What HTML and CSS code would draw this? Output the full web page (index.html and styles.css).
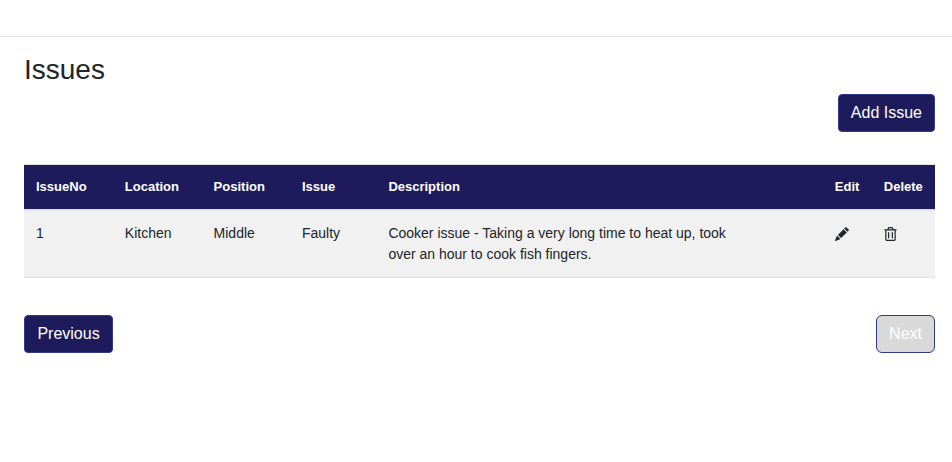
FILE: index.html
```html
<!DOCTYPE html>
<html lang="en">
<head>
<meta charset="utf-8">
<title>Issues</title>
<link rel="stylesheet" href="styles.css">
</head>
<body>
<header class="topbar"></header>
<main class="content">
  <h1 class="title">Issues</h1>
  <div class="actions">
    <button class="btn" type="button">Add Issue</button>
  </div>
  <table class="issues">
    <colgroup>
      <col class="c-no"><col class="c-loc"><col class="c-pos"><col class="c-issue"><col class="c-desc"><col class="c-edit"><col class="c-del">
    </colgroup>
    <thead>
      <tr>
        <th>IssueNo</th><th>Location</th><th>Position</th><th>Issue</th><th>Description</th><th>Edit</th><th>Delete</th>
      </tr>
    </thead>
    <tbody>
      <tr>
        <td>1</td>
        <td>Kitchen</td>
        <td>Middle</td>
        <td>Faulty</td>
        <td><div class="desc">Cooker issue - Taking a very long time to heat up, took over an hour to cook fish fingers.</div></td>
        <td>
          <svg class="icon" viewBox="0 0 16 16" aria-label="Edit"><path fill="currentColor" d="M12.854.146a.5.5 0 0 0-.707 0L10.5 1.793 14.207 5.5l1.647-1.646a.5.5 0 0 0 0-.708l-3-3zm.646 6.061L9.793 2.5 3.293 9H3.5a.5.5 0 0 1 .5.5v.5h.5a.5.5 0 0 1 .5.5v.5h.5a.5.5 0 0 1 .5.5v.5h.5a.5.5 0 0 1 .5.5v.207l6.5-6.5zm-7.468 7.468A.5.5 0 0 1 6 13.5V13h-.5a.5.5 0 0 1-.5-.5V12h-.5a.5.5 0 0 1-.5-.5V11h-.5a.5.5 0 0 1-.5-.5V10h-.5a.499.499 0 0 1-.175-.032l-.179.178a.5.5 0 0 0-.11.168l-2 5a.5.5 0 0 0 .65.65l5-2a.5.5 0 0 0 .168-.11l.178-.178z"/></svg>
        </td>
        <td>
          <svg class="icon icon-trash" viewBox="0 0 14 15" aria-label="Delete"><path fill="none" stroke="currentColor" stroke-width="1.3" d="M.5 3h13M4.6 3V1.6q0-1 1-1h2.8q1 0 1 1V3M2 3v10.2q0 1.2 1.2 1.2h7.6q1.2 0 1.2-1.2V3M5 5.5v6.5M9 5.5v6.5"/></svg>
        </td>
      </tr>
    </tbody>
  </table>
  <nav class="pager">
    <button class="btn btn-prev" type="button">Previous</button>
    <button class="btn btn-disabled" type="button" disabled>Next</button>
  </nav>
</main>
</body>
</html>
```

FILE: styles.css
```css
* {
  box-sizing: border-box;
}

html,
body {
  margin: 0;
  background: #fff;
}

body {
  font-family: "Liberation Sans", Arial, sans-serif;
  font-size: 14px;
  line-height: 21px;
  color: #212529;
}

.topbar {
  height: 37px;
  border-bottom: 1px solid #e5e5e5;
}

.content {
  padding: 0 17px 0 24px;
}

.title {
  margin: 16px 0 0;
  font-size: 28px;
  line-height: 33px;
  font-weight: 400;
}

.actions {
  display: flex;
  justify-content: flex-end;
  margin-top: 8px;
}

.btn {
  height: 38px;
  padding: 0 12px;
  font-family: inherit;
  font-size: 16px;
  line-height: 24px;
  color: #fff;
  background: #1e1b5c;
  border: 1px solid #2e3a8c;
  border-radius: 4px;
}

.btn-prev {
  min-width: 89px;
}

.btn-disabled {
  background: #d9d9d9;
  border-radius: 6px;
}

.issues {
  width: 911px;
  margin-top: 32px;
  table-layout: fixed;
  border-collapse: collapse;
}

.c-no,
.c-loc {
  width: 88.8px;
}

.c-pos {
  width: 88.4px;
}

.c-issue {
  width: 86.4px;
}

.c-desc {
  width: 446.4px;
}

.c-edit {
  width: 49px;
}

.c-del {
  width: 63.2px;
}

.issues th {
  height: 45px;
  padding: 0 12px;
  text-align: left;
  font-size: 13px;
  font-weight: 700;
  color: #fff;
  background: #1e1b5c;
  border-top: 1px solid #e0e0e0;
}

.issues td {
  height: 68px;
  padding: 12px;
  vertical-align: top;
  background: #f1f1f1;
  border-top: 2px solid #e0e2e6;
  border-bottom: 1px solid #dee2e6;
}

.desc {
  max-width: 345px;
}

.icon {
  display: block;
  width: 14px;
  height: 14px;
  margin-top: 4px;
}

.icon-trash {
  width: 13px;
  height: 14px;
}

.pager {
  display: flex;
  justify-content: space-between;
  margin-top: 37px;
}
```
